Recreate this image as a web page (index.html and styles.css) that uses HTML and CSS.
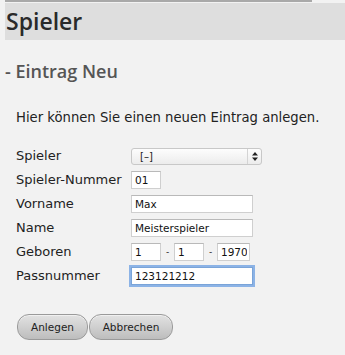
FILE: index.html
```html
<!DOCTYPE html>
<html lang="de">
<head>
    <meta charset="UTF-8">
    <title>Spieler - Eintrag Neu</title>
    <link rel="stylesheet" href="styles.css">
</head>
<body>
    <div class="topline"></div>
    <h1 class="page-title">Spieler</h1>

    <div class="content">
        <h2>- Eintrag Neu</h2>
        <p class="intro">Hier können Sie einen neuen Eintrag anlegen.</p>

        <form class="entry-form">
            <label for="spieler">Spieler</label>
            <div class="select">
                <span>[–]</span>
                <span class="arrows">
                    <svg width="6" height="9" viewBox="0 0 6 9"><path d="M3 0 L6 3.5 H0 Z M3 9 L6 5.5 H0 Z" fill="#222"/></svg>
                </span>
            </div>

            <label for="nummer">Spieler-Nummer</label>
            <div><input type="text" id="nummer" class="short" value="01"></div>

            <label for="vorname">Vorname</label>
            <div><input type="text" id="vorname" class="wide" value="Max"></div>

            <label for="name">Name</label>
            <div><input type="text" id="name" class="wide" value="Meisterspieler"></div>

            <label for="tag">Geboren</label>
            <div class="date">
                <input type="text" id="tag" class="short" value="1">
                <span class="sep">-</span>
                <input type="text" class="short" value="1">
                <span class="sep">-</span>
                <input type="text" class="year" value="1970">
            </div>

            <label for="pass">Passnummer</label>
            <div><input type="text" id="pass" class="wide focus" value="123121212"></div>
        </form>

        <div class="buttons">
            <button>Anlegen</button>
            <button>Abbrechen</button>
        </div>
    </div>
</body>
</html>
```

FILE: styles.css
```css
* {
    box-sizing: border-box;
    margin: 0;
    padding: 0;
}

body {
    background-color: #f2f2f2;
    font-family: 'DejaVu Sans', sans-serif;
    color: #222;
    width: 345px;
    height: 355px;
    overflow: hidden;
}

.topline {
    margin-left: 5px;
    width: 307px;
    height: 2px;
    background-color: #a9a9a9;
}

.page-title {
    margin-left: 5px;
    margin-top: 1px;
    height: 37px;
    padding-left: 1px;
    background-color: #dedede;
    font-family: 'Open Sans', sans-serif;
    font-weight: 600;
    font-size: 23px;
    line-height: 36px;
    color: #2a2a2a;
}

.content {
    padding-left: 5px;
}

h2 {
    margin-top: 18px;
    font-family: 'Open Sans', sans-serif;
    font-weight: 600;
    font-size: 18px;
    line-height: 26px;
    color: #555;
}

.intro {
    margin-top: 26px;
    padding-left: 11px;
    font-size: 13.2px;
    line-height: 16px;
    color: #222;
}

.entry-form {
    margin-top: 21px;
    padding-left: 11px;
    display: grid;
    grid-template-columns: 115px auto;
    row-gap: 6px;
    align-items: center;
    font-size: 13px;
}

.entry-form label {
    line-height: 18px;
    color: #222;
}

.select {
    width: 131px;
    height: 17px;
    display: flex;
    align-items: center;
    justify-content: space-between;
    border: 1px solid #c8c8c8;
    border-radius: 3px;
    background: linear-gradient(#fdfdfd, #ececec);
    font-size: 10px;
    padding-left: 8px;
}

.select .arrows {
    width: 14px;
    height: 15px;
    border-left: 1px solid #d4d4d4;
    display: flex;
    align-items: center;
    justify-content: center;
}

input {
    height: 18px;
    border: 1px solid #cfcfcf;
    border-top-color: #b9b9b9;
    background: #fff;
    font-family: 'DejaVu Sans', sans-serif;
    font-size: 10.5px;
    padding: 0 2px 0 3px;
    color: #111;
}

.short {
    width: 30px;
}

.wide {
    width: 122px;
}

.year {
    width: 33px;
}

.date {
    display: flex;
    align-items: center;
}

.sep {
    width: 13px;
    text-align: center;
    font-size: 9px;
}

.focus {
    outline: 2px solid #8cb3e6;
    outline-offset: 0;
    border-color: #7aa4d8;
}

.buttons {
    margin-top: 29px;
    padding-left: 12px;
    display: flex;
    gap: 1px;
}

button {
    height: 26px;
    padding: 0 8px;
    border: 1px solid #9a9a9a;
    border-radius: 12px;
    background: linear-gradient(#e2e2e2, #bdbdbd);
    box-shadow: inset 0 1px 0 #f0f0f0;
    font-family: 'DejaVu Sans', sans-serif;
    font-size: 10.5px;
    color: #222;
}

button:first-child {
    width: 71px;
}

button:last-child {
    width: 84px;
}
```
